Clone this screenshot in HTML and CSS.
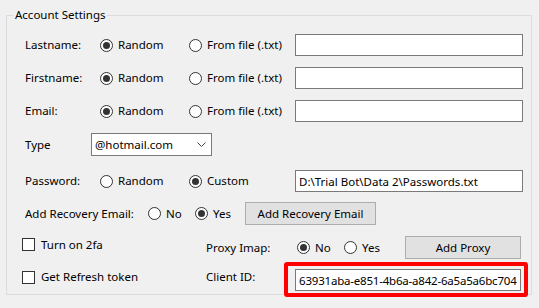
FILE: index.html
```html
<!DOCTYPE html>
<html>
<head>
<meta charset="utf-8">
<link rel="stylesheet" href="styles.css">
</head>
<body>
<fieldset class="group">
  <legend>Account Settings</legend>

  <div class="row r1">
    <span class="lbl w75">Lastname:</span>
    <span class="opt w89"><span class="radio on"></span>Random</span>
    <span class="opt w106"><span class="radio"></span>From file (.txt)</span>
    <span class="input w228"></span>
  </div>

  <div class="row">
    <span class="lbl w75">Firstname:</span>
    <span class="opt w89"><span class="radio on"></span>Random</span>
    <span class="opt w106"><span class="radio"></span>From file (.txt)</span>
    <span class="input w228"></span>
  </div>

  <div class="row">
    <span class="lbl w75">Email:</span>
    <span class="opt w89"><span class="radio on"></span>Random</span>
    <span class="opt w106"><span class="radio"></span>From file (.txt)</span>
    <span class="input w228"></span>
  </div>

  <div class="row r4">
    <span class="lbl w66">Type</span>
    <span class="select"><span class="seltext">@hotmail.com</span>
      <svg class="chev" width="9" height="5" viewBox="0 0 9 5"><polyline points="0.5,0.5 4.5,4.5 8.5,0.5" fill="none" stroke="#444" stroke-width="1"/></svg>
    </span>
  </div>

  <div class="row r5">
    <span class="lbl w75">Password:</span>
    <span class="opt w89"><span class="radio"></span>Random</span>
    <span class="opt w106"><span class="radio on"></span>Custom</span>
    <span class="input w228">D:\Trial Bot\Data 2\Passwords.txt</span>
  </div>

  <div class="row r6">
    <span class="lbl w123">Add Recovery Email:</span>
    <span class="opt w47"><span class="radio"></span>No</span>
    <span class="opt w50"><span class="radio on"></span>Yes</span>
    <span class="btn w131">Add Recovery Email</span>
  </div>

  <div class="row r7">
    <span class="opt w184 cbshift"><span class="check"></span>Turn on 2fa</span>
    <span class="lbl w91">Proxy Imap:</span>
    <span class="opt w47"><span class="radio on"></span>No</span>
    <span class="opt w61"><span class="radio"></span>Yes</span>
    <span class="btn w116">Add Proxy</span>
  </div>

  <div class="row r8">
    <span class="opt w184"><span class="check"></span>Get Refresh token</span>
    <span class="lbl w78">Client ID:</span>
    <span class="redbox"><span class="input w226 cid">63931aba-e851-4b6a-a842-6a5a5a6bc704</span></span>
  </div>
</fieldset>
</body>
</html>
```

FILE: styles.css
```css
html, body {
  margin: 0;
  padding: 0;
}
body {
  background: #f0f0f0;
  font-family: "Noto Sans", "Open Sans", sans-serif;
  font-size: 11.5px;
  color: #000;
  width: 539px;
  height: 308px;
  overflow: hidden;
}
.group {
  margin: 7px 0 0 6px;
  padding: 0;
  width: 526px;
  height: 288px;
  box-sizing: border-box;
  border: 1px solid #dcdcdc;
  min-width: 0;
}
.group legend {
  margin-left: 6px;
  padding: 0 2px;
  line-height: 16px;
  height: 16px;
}
.row {
  display: flex;
  align-items: center;
  height: 22px;
  padding-left: 18px;
  margin-top: 11px;
  white-space: nowrap;
}
.r4 { height: 23px; }
.r5 { margin-top: 14px; }
.r6 { height: 23px; margin-top: 10px; }
.r7 { height: 23px; margin-top: 11px; padding-left: 15px; }
.r8 { height: 30px; margin-top: 3px; padding-left: 15px; }

.lbl, .opt {
  display: flex;
  align-items: center;
  flex: none;
  line-height: 16px;
}
.w47 { width: 47px; }
.w50 { width: 50px; }
.w61 { width: 61px; }
.w66 { width: 66px; }
.w75 { width: 75px; }
.w78 { width: 78px; }
.w89 { width: 89px; }
.w91 { width: 91px; }
.w106 { width: 106px; }
.w116 { width: 116px; }
.w123 { width: 123px; }
.w131 { width: 131px; }
.w184 { width: 184px; }
.w226 { width: 226px; }
.w228 { width: 228px; }

.radio {
  width: 13px;
  height: 13px;
  box-sizing: border-box;
  border: 1px solid #333;
  border-radius: 50%;
  background: #fff;
  margin-right: 5px;
  flex: none;
  display: flex;
  align-items: center;
  justify-content: center;
}
.radio.on::after {
  content: "";
  width: 7px;
  height: 7px;
  border-radius: 50%;
  background: #333;
}
.check {
  width: 13px;
  height: 13px;
  box-sizing: border-box;
  border: 1px solid #333;
  background: #fff;
  margin-right: 6px;
  flex: none;
}
.cbshift { margin-bottom: 6px; }

.input {
  display: flex;
  align-items: center;
  flex: none;
  height: 22px;
  box-sizing: border-box;
  border: 1px solid #7a7a7a;
  background: #fff;
  padding-left: 3px;
  overflow: hidden;
  white-space: nowrap;
}
.cid { letter-spacing: -0.2px; }
.select {
  display: flex;
  align-items: center;
  justify-content: space-between;
  flex: none;
  width: 121px;
  height: 23px;
  box-sizing: border-box;
  border: 1px solid #7a7a7a;
  background: #fff;
  padding: 0 5px 0 3px;
}
.chev { display: block; }
.btn {
  display: flex;
  align-items: center;
  justify-content: center;
  flex: none;
  height: 23px;
  box-sizing: border-box;
  border: 1px solid #adadad;
  background: #e1e1e1;
}
.redbox {
  display: flex;
  flex: none;
  width: 244px;
  height: 35px;
  box-sizing: border-box;
  border: 4px solid #ff0000;
  border-radius: 3px;
  padding: 3px 3px 2px 7px;
  margin-bottom: -5px;
  align-self: flex-start;
}
```
